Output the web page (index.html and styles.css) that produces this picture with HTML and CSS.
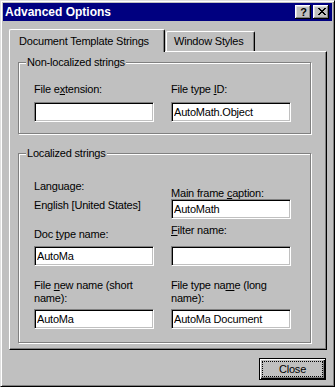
FILE: index.html
```html
<!DOCTYPE html>
<html>
<head>
<meta charset="utf-8">
<link rel="stylesheet" href="styles.css">
</head>
<body>
<div class="window">
  <div class="titlebar">
    <span class="title">Advanced Options</span>
    <div class="tbtns">
      <span class="tbtn tbtn-help">?</span>
      <span class="tbtn tbtn-close"><svg width="8" height="7" viewBox="0 0 8 7" shape-rendering="crispEdges"><path fill="#000" d="M0 0h2v1H0z M6 0h2v1H6z M1 1h2v1H1z M5 1h2v1H5z M2 2h4v1H2z M3 3h2v1H3z M2 4h4v1H2z M1 5h2v1H1z M5 5h2v1H5z M0 6h2v1H0z M6 6h2v1H6z"/></svg></span>
    </div>
  </div>
  <div class="tabs">
    <div class="tab tab-active">Document Template Strings</div>
    <div class="tab tab-inactive">Window Styles</div>
  </div>
  <div class="panel">
    <div class="group g1">
      <span class="legend">Non-localized strings</span>
      <div class="cols">
        <div class="col">
          <label class="lbl mt-20">File e<u>x</u>tension:</label>
          <input class="field mt-6" type="text" value="">
        </div>
        <div class="col">
          <label class="lbl mt-20">File type <u>I</u>D:</label>
          <input class="field mt-6" type="text" value="AutoMath.Object">
        </div>
      </div>
    </div>
    <div class="group g2">
      <span class="legend">Localized strings</span>
      <div class="cols">
        <div class="col">
          <span class="lbl mt-26">Language:</span>
          <span class="lbl mt-6">English [United States]</span>
          <label class="lbl mt-16">Doc <u>t</u>ype name:</label>
          <input class="field mt-5" type="text" value="AutoMa">
          <label class="lbl mt-13"><span class="line">File <u>n</u>ew name (short</span><span class="line">name):</span></label>
          <input class="field mt-4" type="text" value="AutoMa">
        </div>
        <div class="col">
          <label class="lbl mt-33">Main frame <u>c</u>aption:</label>
          <input class="field mt-n1" type="text" value="AutoMath">
          <label class="lbl mt-5"><u>F</u>ilter name:</label>
          <input class="field mt-9" type="text" value="">
          <label class="lbl mt-13"><span class="line">File type na<u>m</u>e (long</span><span class="line">name):</span></label>
          <input class="field mt-4" type="text" value="AutoMa Document">
        </div>
      </div>
    </div>
  </div>
  <div class="footer">
    <div class="btn btn-default"><span class="focus">Close</span></div>
  </div>
</div>
</body>
</html>
```
FILE: styles.css
```css
body {
  margin: 0;
  background: #c0c0c0;
  font-family: "Liberation Sans", Arial, sans-serif;
  font-size: 11px;
  line-height: 13px;
  letter-spacing: -0.2px;
  color: #000;
}

.window {
  width: 335px;
  height: 387px;
  box-sizing: border-box;
  background: #c0c0c0;
  border: 1px solid;
  border-color: #dfdfdf #000 #000 #dfdfdf;
  box-shadow: inset 1px 1px 0 #fff, inset -1px -1px 0 #808080;
  padding: 2px;
}

.titlebar {
  height: 18px;
  background: #000080;
  color: #fff;
  display: flex;
  align-items: center;
  justify-content: space-between;
  padding: 0 3px 0 2px;
}

.title {
  font-weight: bold;
  font-size: 12px;
  line-height: 18px;
  letter-spacing: 0;
}

.tbtns {
  display: flex;
  gap: 2px;
}

.tbtn {
  width: 16px;
  height: 14px;
  box-sizing: border-box;
  background: #c0c0c0;
  box-shadow: inset -1px -1px 0 #000, inset 1px 1px 0 #fff, inset -2px -2px 0 #808080, inset 2px 2px 0 #dfdfdf;
  color: #000;
  display: flex;
}

.tbtn-help {
  justify-content: center;
  align-items: center;
  font-weight: bold;
  font-size: 11px;
  line-height: 14px;
  letter-spacing: 0;
  padding-left: 1px;
}

.tbtn-close {
  padding: 3px 0 0 5px;
}

.tbtn-close svg {
  display: block;
}

.tabs {
  display: flex;
  align-items: flex-end;
  height: 22px;
  margin: 8px 0 0 6px;
}

.tab {
  box-sizing: border-box;
  background: #c0c0c0;
  border-top: 1px solid #fff;
  border-left: 1px solid #fff;
  border-right: 1px solid #000;
  box-shadow: inset -1px 0 0 #808080;
  border-radius: 2px 2px 0 0;
  white-space: nowrap;
}

.tab-active {
  width: 156px;
  height: 23px;
  margin-bottom: -1px;
  padding: 5px 0 0 9px;
  position: relative;
  z-index: 1;
}

.tab-inactive {
  width: 89px;
  height: 20px;
  margin-left: 1px;
  padding: 3px 0 0 7px;
}

.panel {
  box-sizing: border-box;
  width: 318px;
  height: 299px;
  margin-left: 6px;
  border: 1px solid;
  border-color: #fff #000 #000 #fff;
  box-shadow: inset -1px -1px 0 #808080;
  padding: 10px 0 0 8px;
}

.group {
  position: relative;
  box-sizing: border-box;
  width: 293px;
  border: 1px solid #808080;
  box-shadow: 1px 1px 0 #fff, inset 1px 1px 0 #fff;
}

.g1 {
  height: 72px;
}

.g2 {
  height: 190px;
  margin-top: 19px;
}

.legend {
  position: absolute;
  left: 7px;
  top: -7px;
  padding: 0 1px;
  background: #c0c0c0;
  white-space: nowrap;
}

.cols {
  display: flex;
  gap: 17px;
  padding-left: 15px;
}

.col {
  width: 120px;
  display: flex;
  flex-direction: column;
  align-items: flex-start;
}

.lbl {
  display: block;
  white-space: nowrap;
}

.line {
  display: block;
}

.field {
  box-sizing: border-box;
  width: 120px;
  height: 20px;
  margin: 0;
  border: 1px solid;
  border-color: #808080 #fff #fff #808080;
  box-shadow: inset 1px 1px 0 #000, inset -1px -1px 0 #c0c0c0;
  background: #fff;
  font: inherit;
  letter-spacing: inherit;
  color: #000;
  padding: 0 0 0 2px;
  outline: none;
}

.mt-n1 { margin-top: -1px; }
.mt-4 { margin-top: 4px; }
.mt-5 { margin-top: 5px; }
.mt-6 { margin-top: 6px; }
.mt-9 { margin-top: 9px; }
.mt-13 { margin-top: 13px; }
.mt-16 { margin-top: 16px; }
.mt-20 { margin-top: 20px; }
.mt-26 { margin-top: 26px; }
.mt-33 { margin-top: 33px; }

.footer {
  display: flex;
  justify-content: flex-end;
  margin-top: 8px;
  padding-right: 6px;
}

.btn {
  box-sizing: border-box;
  width: 67px;
  height: 22px;
  background: #c0c0c0;
  border: 1px solid #000;
  box-shadow: inset 1px 1px 0 #fff, inset -1px -1px 0 #000, inset -2px -2px 0 #808080;
  padding: 2px;
}

.focus {
  display: flex;
  height: 100%;
  box-sizing: border-box;
  border: 1px dotted #000;
  align-items: center;
  justify-content: center;
}
```
